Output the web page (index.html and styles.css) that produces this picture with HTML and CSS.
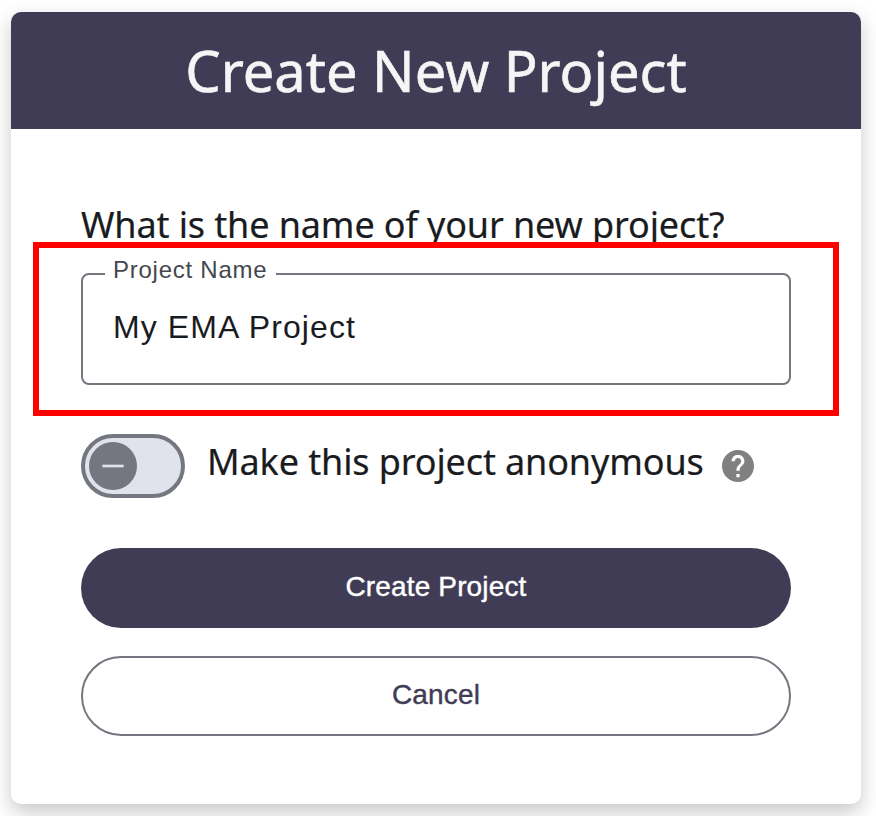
FILE: index.html
```
<!DOCTYPE html>
<html lang="en">
<head>
  <meta charset="UTF-8" />
  <meta name="viewport" content="width=device-width, initial-scale=1.0"/>
  <title>Create New Project</title>
  <link rel="stylesheet" href="styles.css">
</head>
<body>
  <div class="card">
    <div class="card-header">
      <h1>Create New Project</h1>
    </div>

    <form class="card-body">
      <p class="prompt">What is the name of your new project?</p>

      <div class="field">
        <label class="field-label" for="projectName">Project Name</label>
        <input class="field-input" id="projectName" type="text" value="My EMA Project">
        <div class="highlight"></div>
      </div>

      <div class="toggle-row">
        <div class="toggle">
          <div class="toggle-handle">
            <svg width="32" height="32" viewBox="0 0 24 24" fill="#e0e2ec"><path d="M20 13H4v-2h16v2z"/></svg>
          </div>
        </div>
        <span class="toggle-text">Make this project anonymous</span>
        <svg class="help-icon" viewBox="2 2 20 20" fill="#808080">
          <path d="M12 2C6.48 2 2 6.48 2 12s4.48 10 10 10 10-4.48 10-10S17.52 2 12 2zm1 17h-2v-2h2v2zm2.07-7.75l-.9.92C13.45 12.9 13 13.5 13 15h-2v-.5c0-1.1.45-2.1 1.17-2.83l1.24-1.26c.37-.36.59-.86.59-1.41 0-1.1-.9-2-2-2s-2 .9-2 2H8c0-2.21 1.79-4 4-4s4 1.79 4 4c0 .88-.36 1.68-.93 2.25z"/>
        </svg>
      </div>

      <button type="button" class="btn btn-primary">Create Project</button>
      <button type="button" class="btn btn-outline">Cancel</button>
    </form>
  </div>
</body>
</html>
```

FILE: styles.css
```
* {
  box-sizing: border-box;
}

body {
  margin: 0;
  padding: 12px 15px 12px 11px;
  height: 816px;
  overflow: hidden;
  background: #fff;
  color: #1a1b1f;
  font-family: "Noto Sans", sans-serif;
}

.card {
  height: 792px;
  background: #fff;
  border-radius: 10px;
  box-shadow: 0 8px 20px rgba(0, 0, 0, 0.22);
}

.card-header {
  height: 117px;
  padding-top: 18px;
  background: #403c55;
  border-radius: 10px 10px 0 0;
  text-align: center;
}

h1 {
  margin: 0;
  color: #f5f5f5;
  font-size: 56px;
  font-weight: 400;
  line-height: 80px;
  -webkit-text-stroke: 0.6px;
}

.card-body {
  display: flex;
  flex-direction: column;
  padding: 72px 70px 0;
}

.prompt {
  margin: 0;
  font-size: 36px;
  line-height: 48px;
  letter-spacing: -0.12px;
  white-space: nowrap;
  -webkit-text-stroke: 0.2px;
}

.field {
  position: relative;
  height: 112px;
  margin-top: 24px;
  border: 2px solid #74777f;
  border-radius: 8px;
}

.field-label {
  position: absolute;
  top: -20px;
  left: 22px;
  width: 171px;
  padding-left: 8px;
  background: #fff;
  color: #44474e;
  font-family: "Liberation Sans", Arial, sans-serif;
  font-size: 24px;
  line-height: 30px;
  letter-spacing: 0.75px;
  white-space: nowrap;
}

.field-input {
  width: 100%;
  height: 108px;
  padding: 0 30px 4px;
  border: none;
  outline: none;
  background: transparent;
  color: #1a1b1f;
  font-family: "Liberation Sans", Arial, sans-serif;
  font-size: 32px;
  letter-spacing: 1.1px;
}

/* red frame drawn over the field */
.highlight {
  position: absolute;
  top: -33px;
  left: -50px;
  width: 806px;
  height: 174px;
  border: 6px solid #f00;
  pointer-events: none;
}

.toggle-row {
  display: flex;
  align-items: center;
  height: 64px;
  margin-top: 49px;
}

.toggle {
  display: flex;
  align-items: center;
  width: 104px;
  height: 64px;
  padding-left: 4px;
  background: #e0e2ec;
  border: 4px solid #74777f;
  border-radius: 32px;
}

.toggle-handle {
  display: flex;
  align-items: center;
  justify-content: center;
  width: 48px;
  height: 48px;
  background: #74777f;
  border-radius: 50%;
}

.toggle-text {
  margin: -8px 0 0 22px;
  font-size: 36px;
  line-height: 48px;
  letter-spacing: -0.12px;
  white-space: nowrap;
  -webkit-text-stroke: 0.2px;
}

.help-icon {
  width: 32px;
  height: 32px;
  margin-left: 18px;
}

.btn {
  height: 80px;
  padding: 0 0 2px;
  border: none;
  border-radius: 40px;
  font-family: "Liberation Sans", Arial, sans-serif;
  font-size: 28px;
  letter-spacing: 0.15px;
  -webkit-text-stroke: 0.4px;
}

.btn-primary {
  margin-top: 50px;
  background: #403c55;
  color: #fff;
}

.btn-outline {
  margin-top: 28px;
  background: #fff;
  border: 2px solid #74777f;
  color: #403c55;
}
```
